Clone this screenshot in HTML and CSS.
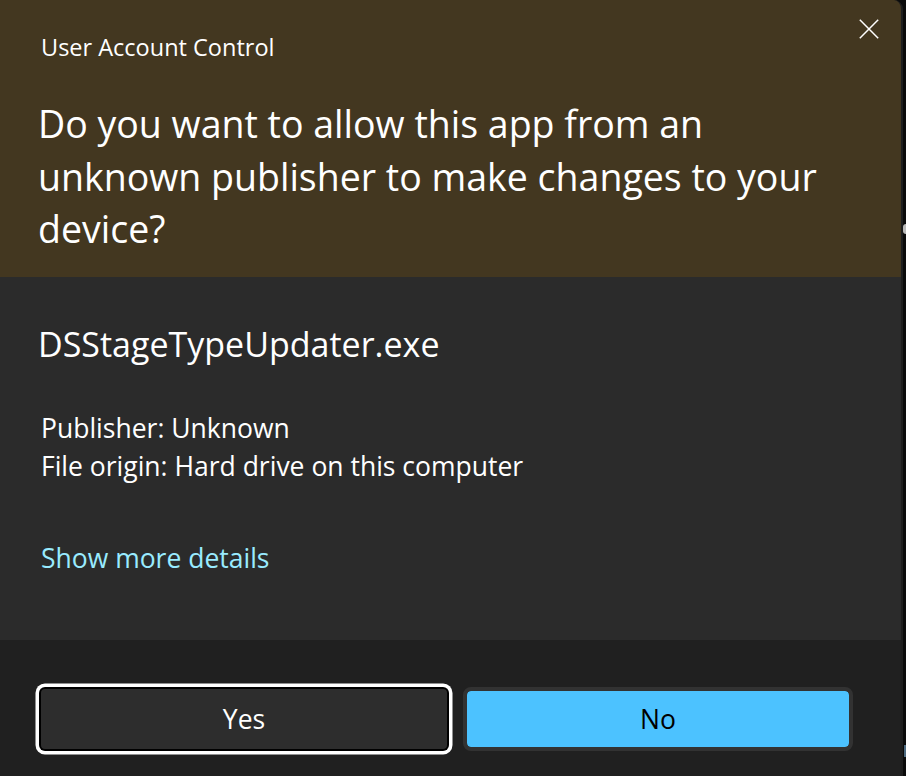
FILE: index.html
```html
<!DOCTYPE html>
<html lang="en">
<head>
<meta charset="utf-8">
<title>User Account Control</title>
<link rel="stylesheet" href="styles.css">
</head>
<body>
<div class="screen">
  <div class="dialog">
    <header class="head">
      <div class="titlebar">
        <div class="title">User Account Control</div>
        <button class="close" aria-label="Close">
          <svg width="20" height="20" viewBox="0 0 20 20"><path d="M0.8 0.8 L19.2 19.2 M19.2 0.8 L0.8 19.2" stroke="#fff" stroke-width="1.5" fill="none"/></svg>
        </button>
      </div>
      <h1 class="question">Do you want to allow this app from an unknown publisher to make changes to your device?</h1>
    </header>
    <section class="body">
      <div class="appname">DSStageTypeUpdater.exe</div>
      <div class="details">
        <div>Publisher: Unknown</div>
        <div>File origin: Hard drive on this computer</div>
      </div>
      <a class="more" href="#">Show more details</a>
    </section>
    <footer class="foot">
      <button class="btn btn-yes">Yes</button>
      <button class="btn btn-no">No</button>
    </footer>
  </div>
  <span class="frag frag-a"></span>
  <span class="frag frag-b"></span>
</div>
</body>
</html>
```
FILE: styles.css
```css
html, body {
  margin: 0;
  padding: 0;
  background: #0b0b0b;
}
body {
  width: 906px;
  height: 776px;
  overflow: hidden;
  font-family: "Open Sans", "Noto Sans", sans-serif;
  color: #ffffff;
}
.screen {
  position: relative;
  width: 906px;
  height: 776px;
}
.dialog {
  width: 901px;
  height: 776px;
  border-right: 2px solid #1e1e1e;
  border-top-right-radius: 9px;
  overflow: hidden;
  display: flex;
  flex-direction: column;
  background: #202020;
}
.head {
  background: #433720;
  padding: 19px 22px 21px 38px;
}
.titlebar {
  display: flex;
  justify-content: space-between;
  align-items: flex-start;
}
.title {
  margin: 12px 0 0 3px;
  font-size: 23.5px;
  line-height: 32px;
}
.close {
  width: 20px;
  height: 20px;
  padding: 0;
  border: 0;
  background: none;
  display: block;
}
.close svg { display: block; }
.question {
  margin: 35px 0 0 0;
  max-width: 810px;
  font-size: 37.5px;
  line-height: 52.5px;
  font-weight: 400;
}
.body {
  background: #2b2b2b;
  padding: 44px 38px 63px;
  display: flex;
  flex-direction: column;
  align-items: flex-start;
}
.appname {
  font-size: 34px;
  line-height: 46px;
}
.details {
  margin: 42px 0 0 3px;
  font-size: 26.5px;
  line-height: 38px;
}
.more {
  margin: 54px 0 0 3px;
  font-size: 26.5px;
  line-height: 38px;
  color: #99ebff;
  text-decoration: none;
}
.foot {
  flex: 1;
  background: #202020;
  padding: 47px 0 0 41px;
  display: flex;
  align-items: flex-start;
}
.btn {
  font-family: "Open Sans", "Noto Sans", sans-serif;
  font-size: 26.5px;
  line-height: 36px;
  padding: 0;
  box-sizing: border-box;
}
.btn-yes {
  margin-top: 2px;
  width: 406px;
  height: 60px;
  background: #2d2d2d;
  color: #ffffff;
  border: 0;
  border-radius: 4px;
  box-shadow: 0 0 0 2px #000000, 0 0 0 5.5px #ffffff;
}
.btn-no {
  margin-left: 16px;
  width: 390px;
  height: 64px;
  background: #4cc2ff;
  color: #000000;
  border: 4px solid #323232;
  border-radius: 8px;
  background-clip: padding-box;
}
.frag {
  position: absolute;
  display: block;
}
.frag-a {
  left: 903px;
  top: 224px;
  width: 3px;
  height: 10px;
  background: #b9b9b9;
  border-radius: 3px 0 0 3px;
}
.frag-b {
  left: 904px;
  top: 745px;
  width: 2px;
  height: 12px;
  background: #4d6a80;
}
```
